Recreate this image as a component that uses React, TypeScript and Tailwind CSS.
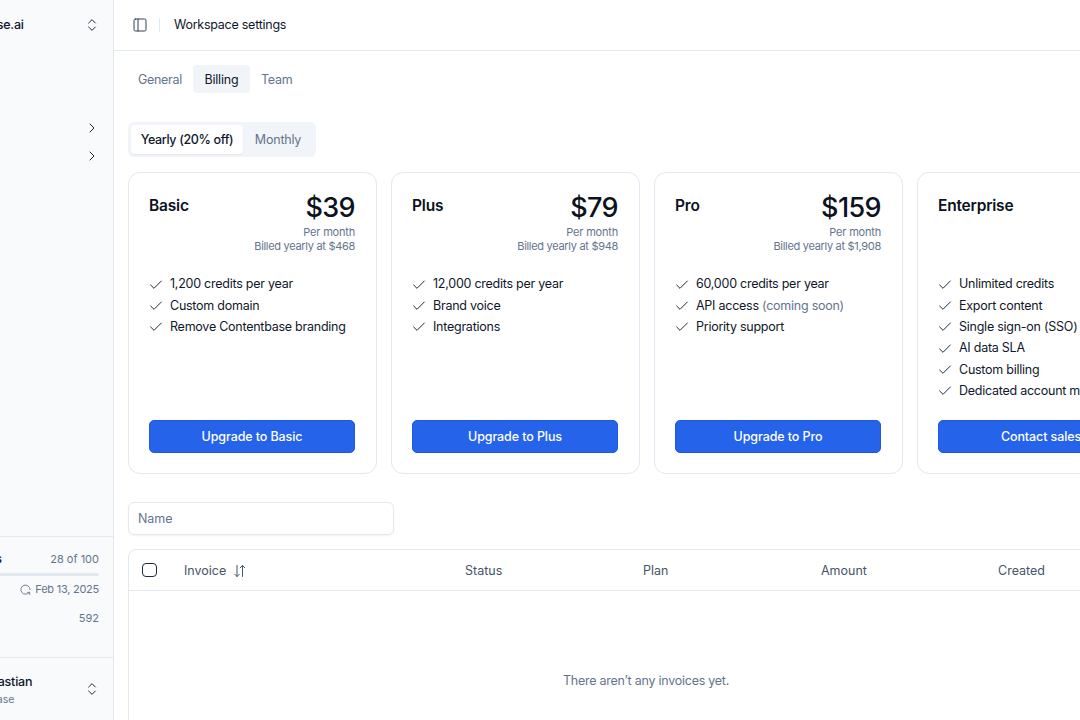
import { Check, ChevronRight, ChevronsUpDown, PanelLeft } from 'lucide-react';

const plans = [
  {
    name: 'Basic',
    price: '$39',
    billed: 'Billed yearly at $468',
    cta: 'Upgrade to Basic',
    features: ['1,200 credits per year', 'Custom domain', 'Remove Contentbase branding'],
  },
  {
    name: 'Plus',
    price: '$79',
    billed: 'Billed yearly at $948',
    cta: 'Upgrade to Plus',
    features: ['12,000 credits per year', 'Brand voice', 'Integrations'],
  },
  {
    name: 'Pro',
    price: '$159',
    billed: 'Billed yearly at $1,908',
    cta: 'Upgrade to Pro',
    features: ['60,000 credits per year', 'API access', 'Priority support'],
  },
  {
    name: 'Enterprise',
    price: '',
    billed: '',
    cta: 'Contact sales',
    features: ['Unlimited credits', 'Export content', 'Single sign-on (SSO)', 'AI data SLA', 'Custom billing', 'Dedicated account manager'],
  },
];

function Sidebar() {
  return (
    <aside className="w-[114px] h-full shrink-0 overflow-hidden bg-[#f8fafc] border-r border-[#e2e8f0]">
      <div className="w-[240px] ml-[-127px] h-full flex flex-col">
        <div className="h-[50px] flex items-center justify-between pl-[63px] pr-[13px]">
          <span className="text-[12.5px] tracking-[-0.2px] font-medium text-[#0f172a]">Contentbase.ai</span>
          <ChevronsUpDown className="size-4 text-[#1e293b]" strokeWidth={1.5} />
        </div>
        <div className="h-[486px] flex flex-col items-end pr-[13px] pt-[70px] gap-[12px]">
          <ChevronRight className="size-4 text-[#1e293b]" strokeWidth={1.5} />
          <ChevronRight className="size-4 text-[#1e293b]" strokeWidth={1.5} />
        </div>
        <div className="h-[121px] border-t border-[#e2e8f0] px-[14px] pt-[14px] text-[11px] text-[#64748b]">
          <div className="flex justify-between items-center h-[16px]">
            <span className="pl-[75px] text-[12px] tracking-[-0.2px] font-medium text-[#0f172a]">Credits</span>
            <span>28 of 100</span>
          </div>
          <div className="mt-[6px] h-[3px] rounded-full bg-[#e2e8f0]" />
          <div className="mt-[5px] flex justify-end items-center gap-[4px] h-[16px]">
            <svg width="11" height="11" viewBox="0 0 12 12" fill="none" stroke="currentColor" strokeWidth="1">
              <path d="M10 9.2A5 5 0 1 1 11 6M8.4 9.2H10.6V11.4" strokeLinecap="round" strokeLinejoin="round" />
            </svg>
            <span className="tracking-[-0.25px]">Feb 13, 2025</span>
          </div>
          <div className="mt-[13px] flex justify-end h-[16px] items-center">592</div>
        </div>
        <div className="flex-1 border-t border-[#e2e8f0] pl-[14px] pr-[13px] pt-[15px] flex justify-between">
          <div className="pl-[88px]">
            <div className="text-[12.5px] tracking-[-0.2px] leading-[18px] font-medium text-[#0f172a]">Sebastian</div>
            <div className="ml-[-24px] text-[10.5px] leading-[18px] text-[#64748b]">Contentbase</div>
          </div>
          <ChevronsUpDown className="size-4 mt-[8px] text-[#1e293b]" strokeWidth={1.5} />
        </div>
      </div>
    </aside>
  );
}

function PlanCard({ plan }: { plan: (typeof plans)[number] }) {
  return (
    <div className="w-[248.5px] h-[302px] shrink-0 rounded-[12px] border border-[#e2e8f0] bg-white pl-[20px] pr-[20.5px] pt-[18px] flex flex-col">
      <div className="h-[64px] flex justify-between items-start">
        <span className="text-[15.5px] tracking-[-0.2px] leading-[30px] font-semibold text-[#0b1220]">{plan.name}</span>
        {plan.price && (
          <div className="text-right">
            <div className="text-[27px] tracking-[-0.6px] leading-[34px] font-medium text-[#0b1220]">{plan.price}</div>
            <div className="text-[11px] tracking-[-0.2px] leading-[14px] text-[#64748b]">Per month</div>
            <div className="text-[11px] tracking-[-0.3px] leading-[14px] text-[#64748b]">{plan.billed}</div>
          </div>
        )}
      </div>
      <ul className="mt-[20.8px] flex flex-col gap-[3.33px]">
        {plan.features.map((feature) => (
          <li key={feature} className="flex items-center gap-[6px] ml-[-1px] h-[18px] text-[12.5px] tracking-[-0.25px] whitespace-nowrap text-[#0f172a]">
            <Check className="size-4 shrink-0 text-[#1e293b]" strokeWidth={1.5} />
            <span>
              {feature}
              {feature === 'API access' && <span className="text-[#64748b]"> (coming soon)</span>}
            </span>
          </li>
        ))}
      </ul>
      <button className="mt-auto mb-[20px] h-[33px] pt-px shrink-0 rounded-[5px] border border-[#2159dc] bg-[#2563eb] text-[12.5px] tracking-[-0.1px] font-medium text-white">
        {plan.cta}
      </button>
    </div>
  );
}

export default function App() {
  return (
    <div className="w-[1080px] h-[720px] overflow-hidden flex bg-white font-['Inter',sans-serif]">
      <Sidebar />
      <main className="flex-1 min-w-0 h-full">
        <header className="h-[51px] flex items-center border-b border-[#e2e8f0] pl-[18px]">
          <PanelLeft className="size-4 text-[#334155]" strokeWidth={1.5} />
          <div className="w-px h-[14px] bg-[#e2e8f0] ml-[11px] mr-[14px]" />
          <span className="pt-px text-[12.5px] tracking-[-0.25px] text-[#0f172a]">Workspace settings</span>
        </header>
        <div className="pl-[14px] w-[1060px]">
          <nav className="mt-[14px] flex items-center h-[28px] text-[12.5px] tracking-[-0.2px] text-[#64748b]">
            <span className="pl-[10px] pr-[11px] pt-[2px] tracking-[-0.3px]">General</span>
            <span className="px-[11.5px] pt-[2px] h-full flex items-center rounded-[4px] bg-[#f1f5f9] text-[#0f172a]">Billing</span>
            <span className="px-[11px] pt-[2px]">Team</span>
          </nav>
          <div className="mt-[29px] w-[188px] h-[35px] rounded-[6px] bg-[#f1f5f9] p-[3px] flex text-[12.5px] tracking-[-0.2px]">
            <span className="w-[112px] pt-px rounded-[4px] bg-white flex items-center justify-center font-medium tracking-[-0.35px] text-[#0f172a] shadow-[0_1px_2px_rgba(15,23,42,0.06)]">Yearly (20% off)</span>
            <span className="flex-1 pt-px flex items-center justify-center text-[#64748b]">Monthly</span>
          </div>
          <div className="mt-[15px] flex gap-[14.5px]">
            {plans.map((plan) => (
              <PlanCard key={plan.name} plan={plan} />
            ))}
          </div>
          <div className="mt-[28px] w-[266px] h-[33px] pt-px rounded-[6px] border border-[#e2e8f0] shadow-[0_1px_2px_rgba(15,23,42,0.05)] flex items-center px-[9px] text-[12.5px] tracking-[-0.05px] text-[#64748b]">
            Name
          </div>
          <div className="mt-[14px] w-[1036px] h-[220px] rounded-t-[8px] border border-[#e2e8f0]">
            <div className="h-[41px] border-b border-[#e2e8f0] flex items-center text-[12.5px] text-[#475569]">
              <div className="w-[55px] pl-[13px]">
                <div className="size-[14.5px] rounded-[4px] border border-[#1e293b]" />
              </div>
              <div className="w-[281px] pt-[2px] flex items-center gap-[7px]">
                Invoice
                <svg width="14" height="14" viewBox="0 0 14 14" fill="none" stroke="currentColor" strokeWidth="1" strokeLinecap="round" strokeLinejoin="round">
                  <path d="M4 1.5v11M1.7 10.2 4 12.5l2.3-2.3M9.5 12.5v-11M7.2 3.8 9.5 1.5l2.3 2.3" />
                </svg>
              </div>
              <div className="w-[178px] pt-[2px]">Status</div>
              <div className="w-[178px] pt-[2px]">Plan</div>
              <div className="w-[177px] pt-[2px]">Amount</div>
              <div className="pt-[2px]">Created</div>
            </div>
            <div className="h-[178px] pt-[2px] flex items-center justify-center text-[12.5px] tracking-[-0.25px] text-[#64748b]">
              There aren’t any invoices yet.
            </div>
          </div>
        </div>
      </main>
    </div>
  );
}
